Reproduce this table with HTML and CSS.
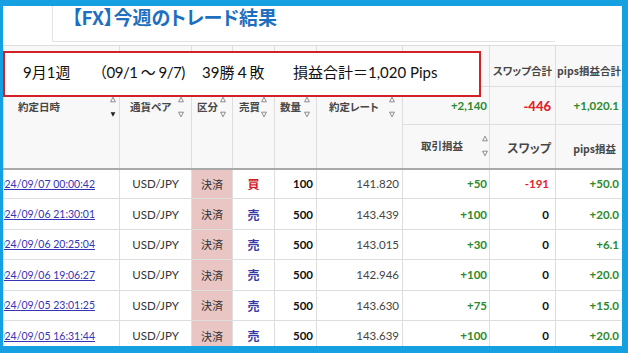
FILE: index.html
```html
<!DOCTYPE html>
<html lang="ja">
<head>
<meta charset="utf-8">
<title>【FX】今週のトレード結果</title>
<link rel="stylesheet" href="styles.css">
</head>
<body>
<div class="frame">
  <header class="title-row">
    <div class="title-box"><h1 class="title">【FX】今週のトレード結果</h1></div>
  </header>

  <table class="trades">
    <colgroup>
      <col class="w-date"><col class="w-pair"><col class="w-kind"><col class="w-side"><col class="w-qty"><col class="w-rate"><col class="w-pl"><col class="w-swap"><col class="w-pips">
    </colgroup>
    <thead>
      <tr class="h1">
        <th rowspan="3" class="sort c-date"><div class="hc"><span class="lbl">約定日時</span><span class="arrows"><svg class="ar" viewBox="0 0 7 7"><path d="M3.5 0.8L6.3 6.2H0.7Z" class="ar-o"/></svg><svg class="ar" viewBox="0 0 7 7"><path d="M0.7 0.8H6.3L3.5 6.2Z" class="ar-f"/></svg></span></div></th>
        <th rowspan="3" class="sort c-pair"><div class="hc"><span class="lbl">通貨ペア</span><span class="arrows"><svg class="ar" viewBox="0 0 7 7"><path d="M3.5 0.8L6.3 6.2H0.7Z" class="ar-o"/></svg><svg class="ar" viewBox="0 0 7 7"><path d="M0.7 0.8H6.3L3.5 6.2Z" class="ar-o"/></svg></span></div></th>
        <th rowspan="3" class="sort c-kind"><div class="hc"><span class="lbl">区分</span><span class="arrows"><svg class="ar" viewBox="0 0 7 7"><path d="M3.5 0.8L6.3 6.2H0.7Z" class="ar-o"/></svg><svg class="ar" viewBox="0 0 7 7"><path d="M0.7 0.8H6.3L3.5 6.2Z" class="ar-o"/></svg></span></div></th>
        <th rowspan="3" class="sort c-side"><div class="hc"><span class="lbl">売買</span><span class="arrows"><svg class="ar" viewBox="0 0 7 7"><path d="M3.5 0.8L6.3 6.2H0.7Z" class="ar-o"/></svg><svg class="ar" viewBox="0 0 7 7"><path d="M0.7 0.8H6.3L3.5 6.2Z" class="ar-o"/></svg></span></div></th>
        <th rowspan="3" class="sort c-qty"><div class="hc"><span class="lbl">数量</span><span class="arrows"><svg class="ar" viewBox="0 0 7 7"><path d="M3.5 0.8L6.3 6.2H0.7Z" class="ar-o"/></svg><svg class="ar" viewBox="0 0 7 7"><path d="M0.7 0.8H6.3L3.5 6.2Z" class="ar-o"/></svg></span></div></th>
        <th rowspan="3" class="sort c-rate"><div class="hc"><span class="lbl">約定レート</span><span class="arrows"><svg class="ar" viewBox="0 0 7 7"><path d="M3.5 0.8L6.3 6.2H0.7Z" class="ar-o"/></svg><svg class="ar" viewBox="0 0 7 7"><path d="M0.7 0.8H6.3L3.5 6.2Z" class="ar-o"/></svg></span></div></th>
        <th class="sum-title"></th>
        <th class="sum-title">スワップ合計</th>
        <th class="sum-title">pips損益合計</th>
      </tr>
      <tr class="h2">
        <td class="sum sum-pl pos">+2,140</td>
        <td class="sum sum-swap neg">-446</td>
        <td class="sum sum-pips pos">+1,020.1</td>
      </tr>
      <tr class="h3">
        <th class="sub sub-pl"><div class="hc hc-end"><span class="lbl">取引損益</span><span class="arrows"><svg class="ar" viewBox="0 0 7 7"><path d="M3.5 0.8L6.3 6.2H0.7Z" class="ar-o"/></svg><svg class="ar" viewBox="0 0 7 7"><path d="M0.7 0.8H6.3L3.5 6.2Z" class="ar-o"/></svg></span></div></th>
        <th class="sub sub-swap"><span class="lbl lbl-lg">スワップ</span></th>
        <th class="sub sub-pips"><span class="lbl">pips損益</span></th>
      </tr>
    </thead>
    <tbody>
      <tr>
        <td class="date"><div class="date-in"><a href="#">2024/09/07 00:00:42</a></div></td>
        <td class="pair">USD/JPY</td><td class="kind">決済</td><td class="side buy">買</td>
        <td class="qty">100</td><td class="rate">141.820</td>
        <td class="pl pos">+50</td><td class="swap neg">-191</td><td class="pips pos">+50.0</td>
      </tr>
      <tr>
        <td class="date"><div class="date-in"><a href="#">2024/09/06 21:30:01</a></div></td>
        <td class="pair">USD/JPY</td><td class="kind">決済</td><td class="side sell">売</td>
        <td class="qty">500</td><td class="rate">143.439</td>
        <td class="pl pos">+100</td><td class="swap zero">0</td><td class="pips pos">+20.0</td>
      </tr>
      <tr>
        <td class="date"><div class="date-in"><a href="#">2024/09/06 20:25:04</a></div></td>
        <td class="pair">USD/JPY</td><td class="kind">決済</td><td class="side sell">売</td>
        <td class="qty">500</td><td class="rate">143.015</td>
        <td class="pl pos">+30</td><td class="swap zero">0</td><td class="pips pos">+6.1</td>
      </tr>
      <tr>
        <td class="date"><div class="date-in"><a href="#">2024/09/06 19:06:27</a></div></td>
        <td class="pair">USD/JPY</td><td class="kind">決済</td><td class="side sell">売</td>
        <td class="qty">500</td><td class="rate">142.946</td>
        <td class="pl pos">+100</td><td class="swap zero">0</td><td class="pips pos">+20.0</td>
      </tr>
      <tr>
        <td class="date"><div class="date-in"><a href="#">2024/09/05 23:01:25</a></div></td>
        <td class="pair">USD/JPY</td><td class="kind">決済</td><td class="side sell">売</td>
        <td class="qty">500</td><td class="rate">143.630</td>
        <td class="pl pos">+75</td><td class="swap zero">0</td><td class="pips pos">+15.0</td>
      </tr>
      <tr>
        <td class="date"><div class="date-in"><a href="#">2024/09/05 16:31:44</a></div></td>
        <td class="pair">USD/JPY</td><td class="kind">決済</td><td class="side sell">売</td>
        <td class="qty">500</td><td class="rate">143.639</td>
        <td class="pl pos">+100</td><td class="swap zero">0</td><td class="pips pos">+20.0</td>
      </tr>
    </tbody>
  </table>

  <div class="summary">
    <span class="s-week">9月1週</span>
    <span class="s-range">（09/1 ～ 9/7)</span>
    <span class="s-record">39勝４敗</span>
    <span class="s-total">損益合計＝1,020 Pips</span>
  </div>
</div>
</body>
</html>
```

FILE: styles.css
```css
* { box-sizing: border-box; }

html, body {
  margin: 0;
  padding: 0;
  background: #ffffff;
}

body {
  font-family: "Lato", "Liberation Sans", "Noto Sans CJK JP", sans-serif;
  color: #333333;
}

.frame {
  position: relative;
  width: 628px;
  height: 353px;
  border-style: solid;
  border-color: #15a1e1;
  border-width: 6px 6px 7px 3px;
  overflow: hidden;
  background: #ffffff;
}

/* ---------- title ---------- */
.title-row {
  height: 40px;
}

.title-box {
  margin-left: 49px;
  width: 503px;
  height: 37px;
  border-left: 1px solid #e3e3e3;
  border-bottom: 1px solid #e3e3e3;
  padding-left: 19px;
}

.title {
  margin: -1px 0 0;
  font: 700 19px/23px "Noto Sans CJK JP", sans-serif;
  font-feature-settings: "palt";
  color: #1f6fc0;
  white-space: nowrap;
}

/* ---------- summary overlay (annotation) ---------- */
.summary {
  position: absolute;
  left: 0;
  top: 45px;
  width: 478px;
  height: 46px;
  border: 2px solid #d42027;
  background: #ffffff;
  display: flex;
  align-items: center;
  padding: 0 0 5px 18px;
  font-family: "Lato", "Noto Sans CJK JP", sans-serif;
  font-size: 15px;
  color: #111111;
  white-space: nowrap;
}

.s-week { width: 69px; }
.s-range { width: 110px; letter-spacing: -0.5px; }
.s-record { width: 91px; }

/* ---------- table ---------- */
.trades {
  width: 619px;
  table-layout: fixed;
  border-collapse: collapse;
}

.w-date { width: 116px; }
.w-pair { width: 72px; }
.w-kind { width: 41px; }
.w-side { width: 42px; }
.w-qty { width: 42px; }
.w-rate { width: 86px; }
.w-pl { width: 87px; }
.w-swap { width: 66px; }
.w-pips { width: 67px; }

.trades th,
.trades td {
  border: 1px solid #dedede;
  padding: 0;
  vertical-align: middle;
  white-space: nowrap;
}

.trades thead th,
.trades thead td {
  background: #f8f8f8;
}

.h1 { height: 41px; }
.h2 { height: 38px; }
.h3 { height: 44px; }

.trades thead .sort,
.trades .h3 th {
  border-bottom: 2px solid #a9a9a9;
}

.hc {
  display: flex;
  align-items: center;
  justify-content: space-between;
  padding-right: 3px;
}

.hc-end {
  justify-content: flex-end;
  gap: 19px;
  padding-right: 1px;
}

.c-date .hc { padding-left: 14px; padding-right: 3px; }
.c-pair .hc { padding-left: 10px; padding-right: 7px; }
.c-kind .hc { padding-left: 5px; padding-right: 6px; }
.c-side .hc { padding-left: 6px; padding-right: 7px; }
.c-qty .hc { padding-left: 5px; padding-right: 6px; }
.c-rate .hc { padding-left: 12px; padding-right: 7px; }

.lbl {
  font: 700 10.5px/14px "Noto Sans CJK JP", sans-serif;
  font-feature-settings: "palt";
  color: #474747;
}

.lbl-lg {
  font-size: 12px;
}

.arrows {
  display: flex;
  flex-direction: column;
  gap: 8px;
}

.ar {
  display: block;
  width: 6px;
  height: 7px;
}

.ar-o {
  fill: none;
  stroke: #6f6f6f;
  stroke-width: 0.9;
}

.ar-f {
  fill: #222222;
}

.trades .sum-title {
  font: 700 10.5px/14px "Noto Sans CJK JP", sans-serif;
  font-feature-settings: "palt";
  color: #474747;
  text-align: center;
  vertical-align: bottom;
  padding-bottom: 8px;
}

.sum {
  text-align: right;
  font-size: 11.5px;
  font-weight: 700;
  padding-top: 3px;
}

.sum-pl { padding-right: 2px !important; }
.sum-swap { padding-right: 4px !important; font-size: 13px; font-weight: 900; }
.sum-pips { padding-right: 3px !important; }

.sub-swap {
  text-align: right;
  padding-right: 4px !important;
}

.sub-pips {
  text-align: right;
  padding-right: 6px !important;
}

/* ---------- body rows ---------- */
.trades tbody tr { height: 30.4px; }

.trades tbody td {
  font-size: 11.5px;
  background: #ffffff;
}

.date-in {
  display: flex;
  justify-content: flex-end;
  overflow: hidden;
  padding-right: 24px;
}

.date-in a {
  color: #3434b4;
  text-decoration: underline;
  font-size: 10.5px;
}

.pair {
  text-align: center;
  color: #333333;
}

.trades tbody .kind {
  text-align: center;
  background: #e9c6c4;
  font: 400 11px "Noto Sans CJK JP", sans-serif;
  color: #333333;
}

.trades tbody .side {
  text-align: center;
  font: 700 12px "Noto Sans CJK JP", sans-serif;
}

.buy { color: #cf1f2a; }
.sell { color: #3a3aa6; }

.qty {
  text-align: right;
  padding-right: 3px !important;
  font-weight: 700;
  color: #111111;
}

.rate {
  text-align: right;
  padding-right: 3px !important;
  color: #444444;
}

.pl {
  text-align: right;
  padding-right: 2px !important;
  font-weight: 700;
}

.swap {
  text-align: right;
  padding-right: 6px !important;
  font-weight: 700;
}

.pips {
  text-align: right;
  padding-right: 3px !important;
  font-weight: 700;
}

.pos { color: #2b8a2b; }
.neg { color: #e4202a; }
.zero { color: #111111; }
```
